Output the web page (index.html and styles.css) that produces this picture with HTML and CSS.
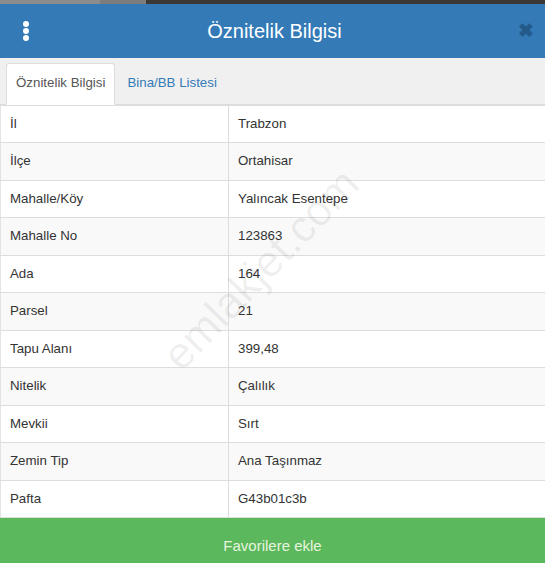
FILE: index.html
```html
<!DOCTYPE html>
<html lang="tr">
  <head>
    <meta charset="utf-8"/>
    <title>Öznitelik Bilgisi</title>
    <link rel="stylesheet" href="styles.css">
  </head>

  <body>
    <div class="photo-strip">
      <span class="strip-a"></span>
      <span class="strip-b"></span>
      <span class="strip-c"></span>
    </div>

    <div class="panel">
      <header class="panel-head">
        <span class="kebab"><i></i><i></i><i></i></span>
        <h1>Öznitelik Bilgisi</h1>
        <span class="close">&#x2716;</span>
      </header>

      <ul class="tabs">
        <li class="active">Öznitelik Bilgisi</li>
        <li>Bina/BB Listesi</li>
      </ul>

      <table class="info">
        <tr><td>İl</td><td>Trabzon</td></tr>
        <tr><td>İlçe</td><td>Ortahisar</td></tr>
        <tr><td>Mahalle/Köy</td><td>Yalıncak Esentepe</td></tr>
        <tr><td>Mahalle No</td><td>123863</td></tr>
        <tr><td>Ada</td><td>164</td></tr>
        <tr><td>Parsel</td><td>21</td></tr>
        <tr><td>Tapu Alanı</td><td>399,48</td></tr>
        <tr><td>Nitelik</td><td>Çalılık</td></tr>
        <tr><td>Mevkii</td><td>Sırt</td></tr>
        <tr><td>Zemin Tip</td><td>Ana Taşınmaz</td></tr>
        <tr><td>Pafta</td><td>G43b01c3b</td></tr>
      </table>

      <button class="fav">Favorilere ekle</button>

      <div class="watermark">emlakjet.com</div>
    </div>
  </body>
</html>
```

FILE: styles.css
```css
* {
  box-sizing: border-box;
}

body {
  margin: 0;
  background: #fff;
  color: #333;
  font: 13.3px / 1.42857 "Liberation Sans", Arial, sans-serif;
  overflow: hidden;
}

/* map photo peeking above the panel */
.photo-strip {
  display: flex;
  height: 4px;
}
.strip-a { width: 100px; background: #8c8c8c; }
.strip-b { width: 46px; background: #7d7d7d; }
.strip-c { flex: 1; background: #3a3936; }

.panel {
  position: relative;
}

.panel-head {
  display: flex;
  align-items: center;
  height: 54px;
  padding: 0 7px 0 23px;
  background: #337ab7;
  color: #fff;
}

.panel-head h1 {
  flex: 1;
  margin: 0;
  text-align: center;
  font-size: 20px;
  font-weight: normal;
}

.kebab {
  display: flex;
  flex-direction: column;
  gap: 1px;
  width: 8px;
}
.kebab i {
  width: 6px;
  height: 6px;
  border-radius: 50%;
  background: #fff;
}

.close {
  width: 20px;
  font-size: 19px;
  font-weight: bold;
  color: #1d4a72;
  opacity: .65;
}

.tabs {
  display: flex;
  list-style: none;
  margin: 0;
  padding: 5px 6px 0;
  background: #f0f0f0;
  border-bottom: 1px solid #ddd;
}
.tabs li {
  padding: 10px 9px 11px 9px;
  color: #337ab7;
  margin-bottom: -1px;
  border: 1px solid transparent;
  border-radius: 3px 3px 0 0;
}
.tabs li.active {
  background: #fff;
  color: #555;
  border-color: #ddd #ddd transparent;
  margin-right: 2px;
}

.info {
  width: 100%;
  border-collapse: collapse;
  border-left: 1px solid #e3e3e3;
}
.info td {
  padding: 8px 10px 8px 9px;
  line-height: 20.45px;
  border-top: 1px solid #ddd;
}
.info td:first-child {
  width: 228px;
  border-right: 1px solid #ddd;
}
.info tr:nth-child(even) {
  background: #f9f9f9;
}

.fav {
  display: block;
  width: 100%;
  height: 46px;
  padding: 10px 0 0;
  border: 0;
  border-top: 1px solid #ddd;
  background: #5cb85c;
  color: #e6f4df;
  font: 15px "Liberation Sans", Arial, sans-serif;
}

.watermark {
  position: absolute;
  left: 101px;
  top: 234px;
  width: 320px;
  text-align: center;
  transform: rotate(-46deg);
  font-size: 44px;
  color: rgba(0, 0, 0, .065);
  pointer-events: none;
}
```
